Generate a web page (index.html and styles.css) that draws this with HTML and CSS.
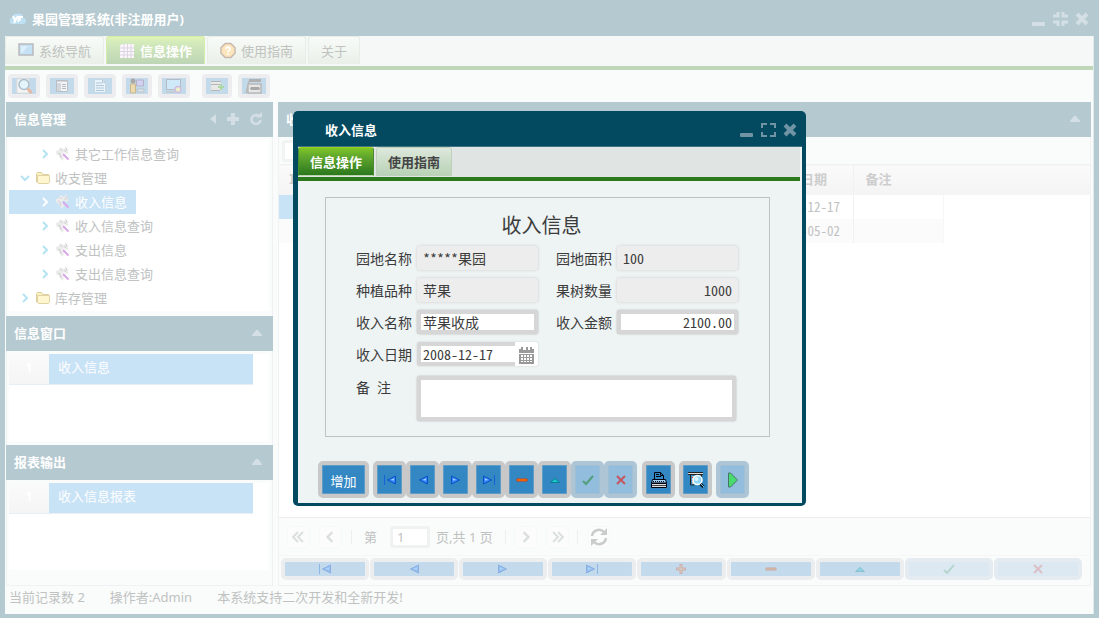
FILE: index.html
```html
<!DOCTYPE html>
<html lang="zh-CN">
<head>
<meta charset="utf-8">
<title>果园管理系统</title>
<meta name="viewport" content="width=device-width, initial-scale=1">
<link rel="stylesheet" href="styles.css">
</head>
<body>
<svg class="defs" aria-hidden="true">
  <defs>
    <symbol id="first" viewBox="0 0 12 12"><path d="M.5 1v10" stroke="#1463d8"/><path d="M11.500 2v8L3.500 6z" fill="#2f86ff" stroke="#0c4fc0"/><path d="M10 4.500v2L6.500 6z" fill="#a9d4ff"/></symbol>
    <symbol id="prev" viewBox="0 0 12 12"><path d="M10.500 2v8L2.500 6z" fill="#2f86ff" stroke="#0c4fc0"/><path d="M9 4.500v2L5.500 6z" fill="#a9d4ff"/></symbol>
    <symbol id="next" viewBox="0 0 12 12"><path d="M1.500 2v8l8-4z" fill="#2f86ff" stroke="#0c4fc0"/><path d="M3 4.500v2L6.500 6z" fill="#a9d4ff"/></symbol>
    <symbol id="last" viewBox="0 0 12 12"><path d="M11.500 1v10" stroke="#1463d8"/><path d="M.5 2v8l8-4z" fill="#2f86ff" stroke="#0c4fc0"/><path d="M2 4.500v2L5.500 6z" fill="#a9d4ff"/></symbol>
    <symbol id="minus" viewBox="0 0 12 12"><path d="M1 5h10v2H1z" fill="#ff8a00" stroke="#dd3c00"/></symbol>
    <symbol id="plus" viewBox="0 0 12 12"><path d="M6 1v10M1 6h10" stroke="#f04a10" stroke-width="3"/><path d="M6 2v8M2 6h8" stroke="#ffb070"/></symbol>
    <symbol id="up" viewBox="0 0 12 12"><path d="M1.500 8.500h9L6 4.500z" fill="#18c9cf" stroke="#087f8f"/></symbol>
    <symbol id="tick" viewBox="0 0 12 12"><path d="M1 7l3 3 7-8" fill="none" stroke="#2f8f4b" stroke-width="2"/></symbol>
    <symbol id="cross" viewBox="0 0 12 12"><path d="M2 2l8 8M10 2l-8 8" stroke="#e02020" stroke-width="2"/></symbol>
    <symbol id="folder" viewBox="0 0 16 14"><path d="M1.500 11V2.500l1-1h4l1 2h6l1 1V11z" fill="#fdf0c0" stroke="#ddcfa0"/><path d="M2.500 4.500h11l1 1v6l-1 1h-10l-1-1z" fill="#fff6cf" stroke="#e0d3a6"/></symbol>
    <symbol id="wand" viewBox="0 0 16 16"><path d="M1 5l3-1 1-3 2 1 2 1 2-3 1 3 2 1-2 1 2 2-3 1-2-2-2 2 2 4-2 3-3-5-3-2z" fill="#ececec"/><path d="M5 3l2 2M11 2l1 3M3 7l2 1 1 4M9 4l2 2" fill="none" stroke="#d0d0d0"/><path d="M8 8l5.500 5.500" stroke="#d9a8e8" stroke-width="2"/></symbol>
    <symbol id="chev" viewBox="0 0 8 10"><path d="M2 1l4 4-4 4" fill="none" stroke="currentColor" stroke-width="2"/></symbol>
    <symbol id="chevs" viewBox="0 0 14 12"><path d="M2 1l5 5-5 5M7 1l5 5-5 5" fill="none" stroke="currentColor" stroke-width="2"/></symbol>
    <symbol id="close" viewBox="0 0 14 14"><path d="M2 2l10 10M12 2L2 12" stroke="currentColor" stroke-width="4"/></symbol>
    <symbol id="min" viewBox="0 0 14 14"><rect x="0" y="10" width="13" height="4" rx="1" fill="currentColor"/></symbol>
    <symbol id="max" viewBox="0 0 15 14"><path d="M1 5V1h5M9 1h5v4M14 9v4H9M6 13H1V9" fill="none" stroke="currentColor" stroke-width="2"/></symbol>
    <symbol id="shrink" viewBox="0 0 15 14"><path d="M0 4h5V0M10 0v4h5M15 10h-5v4M5 14v-4H0" fill="none" stroke="currentColor" stroke-width="3"/></symbol>
    <symbol id="fold" viewBox="0 0 10 6"><path d="M0 6V5l4-5h2l4 5v1z" fill="currentColor"/></symbol>
  </defs>
</svg>

<div class="app">
  <header class="titlebar">
    <svg width="16" height="14" viewBox="0 0 16 14"><path d="M3 12a3 3 0 0 1-1-6 4 4 0 0 1 5-4 4 4 0 0 1 6 4 3 3 0 0 1 0 6z" fill="#bfe0f3"/><path d="M3 4l2 4 3-4M6 7l-2 4M8 10l1-5h4M9 7.500h2" fill="none" stroke="#fff" stroke-width="2"/></svg>
    <h1>果园管理系统(非注册用户)</h1>
    <div class="winbtns">
      <button aria-label="最小化"><svg width="14" height="14"><use href="#min"/></svg></button>
      <button aria-label="还原"><svg width="15" height="14"><use href="#shrink"/></svg></button>
      <button aria-label="关闭"><svg width="14" height="14"><use href="#close"/></svg></button>
    </div>
  </header>

  <div class="frame">
    <nav class="tabs">
      <button class="tab"><svg width="16" height="16" viewBox="0 0 16 16"><rect x="1" y="1" width="14" height="11" fill="#c5e2f5" stroke="#b9b9bd" stroke-width="1.500"/><path d="M3 3h7l-6 7H3z" fill="#ddeffa"/></svg>系统导航</button>
      <button class="tab on"><svg width="16" height="16" viewBox="0 0 16 16"><path d="M3 1h12v14H1V3z" fill="#faf6fc"/><path d="M1 5h14M1 8.500h14M1 12h14M5 1v14M8.500 1v14M12 1v14" stroke="#ddd5e2"/></svg>信息操作</button>
      <button class="tab"><svg width="16" height="17" viewBox="0 0 17 17"><path d="M5.500 1h6L16 5.500v6L11.500 16h-6L1 11.500v-6z" fill="#fae3b8" stroke="#c9b7b2" stroke-width="1.500"/><circle cx="8.500" cy="8.500" r="5.500" fill="#fbe6bd"/><path d="M6.500 7a2 2 0 1 1 3 1.500q-1 .5-1 1.500M8.500 11.500v1.500" fill="none" stroke="#fff" stroke-width="2"/></svg>使用指南</button>
      <button class="tab">关于</button>
    </nav>

    <div class="toolbar">
      <button aria-label="查询"><svg width="18" height="16" viewBox="0 0 18 16"><path d="M2 1h12v14H2z" fill="#f4f4f4" stroke="#ddd"/><circle cx="9" cy="6.500" r="5" fill="#e3f4fb" stroke="#aabfcb" stroke-width="1.500"/><path d="M12.500 10.500l4 4.500" stroke="#e6b9a3" stroke-width="3"/></svg></button>
      <button aria-label="列表"><svg width="16" height="16" viewBox="0 0 16 16"><path d="M2.500 2.500h11v11h-11z" fill="#f2f4f6" stroke="#b9c0c8"/><path d="M2 3h12M6 5v8M8 6.500h4M8 8.500h4M8 10.500h4M4 5v8" stroke="#b9b9c0"/></svg></button>
      <button aria-label="文档"><svg width="16" height="16" viewBox="0 0 16 16"><path d="M2.500 1.500h8l3 3v10h-11z" fill="#e7f4fc" stroke="#c7d7e2"/><path d="M4 5h6M4 7.500h8M4 10h8M4 12.500h8M10.500 1.500v3h3" fill="none" stroke="#b3c8d6"/></svg></button>
      <button class="narrow" aria-label="用户"><svg width="18" height="16" viewBox="0 0 18 16"><circle cx="5" cy="3" r="2.500" fill="#a8a8a8"/><path d="M2.500 6h5v9h-5z" fill="#ecd9ae" stroke="#c9b78e"/><path d="M8.500 2h7v6h-7z" fill="#d4d0f4" stroke="#b3b3c6"/><path d="M9 11h7v3H9z" fill="#dde4ea" stroke="#b8c0c8"/></svg></button>
      <button aria-label="屏幕"><svg width="18" height="16" viewBox="0 0 18 16"><path d="M1.500 1.500h14v10h-14z" fill="#cfe9f8" stroke="#b3bcc4"/><path d="M1 14h9" stroke="#c3ccd3" stroke-width="2"/><circle cx="13" cy="11.500" r="3" fill="#e9efc8" stroke="#cfbce0" stroke-width="1.500"/></svg></button>
      <button class="narrow apart" aria-label="添加记录"><svg width="16" height="16" viewBox="0 0 16 16"><path d="M2 3h10v10H2z" fill="#e8e9e6"/><path d="M2 3.500h10M2 6.500h10M2 12.500h9" stroke="#b5b5b5"/><path d="M12 6v6M9 9h6" stroke="#acd8a4" stroke-width="2"/></svg></button>
      <button aria-label="打印"><svg width="18" height="16" viewBox="0 0 18 16"><path d="M4 1h12v3H4z" fill="#b0b0b0"/><path d="M1 15L4 3M3 6h13v9H3z" fill="#e6e6e6" stroke="#b9b9b9" stroke-width="1.500"/><path d="M6 9h8l1 1.500-1 1.500H6l-1-1.500z" fill="#a8a8a8"/></svg></button>
    </div>

    <main class="work">
      <aside class="side">
        <h2 class="bar">信息管理
          <span class="tools">
            <button aria-label="收起"><svg width="6" height="10" viewBox="0 0 6 10"><path d="M6 0v10L0 5z" fill="currentColor"/></svg></button>
            <button aria-label="添加"><svg width="12" height="12" viewBox="0 0 12 12"><path d="M6 0v12M0 6h12" stroke="currentColor" stroke-width="4"/></svg></button>
            <button aria-label="刷新"><svg width="12" height="13" viewBox="0 0 12 13"><path d="M9 4a4.500 4.500 0 1 0 1.500 4" fill="none" stroke="currentColor" stroke-width="2.500"/><path d="M6 5.500h6V0z" fill="currentColor"/></svg></button>
          </span>
        </h2>
        <ul class="tree">
          <li class="sub"><svg class="chev" width="8" height="10"><use href="#chev"/></svg><svg width="16" height="16"><use href="#wand"/></svg>其它工作信息查询</li>
          <li><svg class="chev open" width="8" height="10"><use href="#chev"/></svg><svg width="16" height="14"><use href="#folder"/></svg>收支管理</li>
          <li class="sub sel"><svg class="chev" width="8" height="10"><use href="#chev"/></svg><svg width="16" height="16"><use href="#wand"/></svg>收入信息</li>
          <li class="sub"><svg class="chev" width="8" height="10"><use href="#chev"/></svg><svg width="16" height="16"><use href="#wand"/></svg>收入信息查询</li>
          <li class="sub"><svg class="chev" width="8" height="10"><use href="#chev"/></svg><svg width="16" height="16"><use href="#wand"/></svg>支出信息</li>
          <li class="sub"><svg class="chev" width="8" height="10"><use href="#chev"/></svg><svg width="16" height="16"><use href="#wand"/></svg>支出信息查询</li>
          <li><svg class="chev" width="8" height="10"><use href="#chev"/></svg><svg width="16" height="14"><use href="#folder"/></svg>库存管理</li>
        </ul>
        <h2 class="bar">信息窗口<span class="tools"><button aria-label="折叠"><svg width="10" height="6"><use href="#fold"/></svg></button></span></h2>
        <ol class="list"><li><b>1</b><span>收入信息</span></li></ol>
        <h2 class="bar">报表输出<span class="tools"><button aria-label="折叠"><svg width="10" height="6"><use href="#fold"/></svg></button></span></h2>
        <ol class="list"><li><b>1</b><span>收入信息报表</span></li></ol>
      </aside>

      <section class="data">
        <h2 class="bar">收入<span class="tools"><button aria-label="折叠"><svg width="10" height="6"><use href="#fold"/></svg></button></span></h2>
        <div class="filter"><input type="text" aria-label="过滤"></div>
        <div class="gridwrap">
          <table class="grid">
            <thead><tr><th class="c-id">ID</th><th class="c-wide"></th><th class="c-std">收入日期</th><th class="c-std line">备注</th><th class="rest"></th></tr></thead>
            <tbody>
              <tr><td class="picked"></td><td></td><td>2008-12-17</td><td class="line end"></td><td class="rest"></td></tr>
              <tr class="alt"><td></td><td></td><td>2008-05-02</td><td class="line end"></td><td class="rest"></td></tr>
            </tbody>
          </table>
        </div>
        <div class="pager">
          <button aria-label="首页"><svg class="flip" width="14" height="12"><use href="#chevs"/></svg></button>
          <button aria-label="上一页"><svg class="flip" width="10" height="12"><use href="#chev"/></svg></button>
          <i></i>
          <label for="page">第</label><input id="page" type="text" value="1"><span>页,共 1 页</span>
          <i class="far"></i>
          <button aria-label="下一页"><svg width="10" height="12"><use href="#chev"/></svg></button>
          <button aria-label="末页"><svg width="14" height="12"><use href="#chevs"/></svg></button>
          <i class="near"></i>
          <button class="reload" aria-label="刷新"><svg width="18" height="18" viewBox="0 0 18 18"><path d="M2 8a7 7 0 0 1 12-4M16 10a7 7 0 0 1-12 4" fill="none" stroke="currentColor" stroke-width="2.500"/><path d="M10 7h7V0zM8 11H1v7z" fill="currentColor"/></svg></button>
        </div>
        <div class="records">
          <button aria-label="首条"><svg width="12" height="12"><use href="#first"/></svg></button>
          <button aria-label="上一条"><svg width="12" height="12"><use href="#prev"/></svg></button>
          <button aria-label="下一条"><svg width="12" height="12"><use href="#next"/></svg></button>
          <button aria-label="末条"><svg width="12" height="12"><use href="#last"/></svg></button>
          <button aria-label="增加"><svg width="12" height="12"><use href="#plus"/></svg></button>
          <button aria-label="删除"><svg width="12" height="12"><use href="#minus"/></svg></button>
          <button aria-label="编辑"><svg width="12" height="12"><use href="#up"/></svg></button>
          <button disabled aria-label="保存"><svg width="12" height="12"><use href="#tick"/></svg></button>
          <button disabled aria-label="取消"><svg width="12" height="12"><use href="#cross"/></svg></button>
        </div>
      </section>
    </main>

    <footer class="status"><span>当前记录数 2</span><span>操作者:Admin</span><span>本系统支持二次开发和全新开发!</span></footer>
  </div>
</div>

<div class="overlay">
  <section class="dialog" role="dialog" aria-labelledby="dlg">
    <header class="dtitle">
      <h2 id="dlg">收入信息</h2>
      <div class="winbtns">
        <button aria-label="最小化"><svg width="14" height="14"><use href="#min"/></svg></button>
        <button aria-label="最大化"><svg width="15" height="14"><use href="#max"/></svg></button>
        <button aria-label="关闭"><svg width="14" height="14"><use href="#close"/></svg></button>
      </div>
    </header>
    <div class="dbody">
      <nav class="dtabs"><button class="on">信息操作</button><button>使用指南</button></nav>
      <form class="card">
        <h3>收入信息</h3>
        <div class="fields">
          <label for="f1">园地名称</label><input id="f1" type="text" value="*****果园" readonly>
          <label for="f2">园地面积</label><input id="f2" type="text" value="100" readonly>
          <label for="f3">种植品种</label><input id="f3" type="text" value="苹果" readonly>
          <label for="f4">果树数量</label><input id="f4" class="num" type="text" value="1000" readonly>
          <label for="f5">收入名称</label><input id="f5" type="text" value="苹果收成">
          <label for="f6">收入金额</label><input id="f6" class="num" type="text" value="2100.00">
          <label for="f7">收入日期</label>
          <div class="date"><input id="f7" type="text" value="2008-12-17"><button type="button" aria-label="选择日期"><svg width="15" height="17" viewBox="0 0 15 17"><path d="M2 0h2v3h3V0h2v3h2V0h2v2h2v4H0V2h2z" fill="#999"/><path d="M0 7h15v10H0z" fill="#999"/><path d="M2 8h2v2H2zM5 8h2v2H5zM8 8h2v2H8zM11 8h2v2h-2zM2 11h2v2H2zM5 11h2v2H5zM8 11h2v2H8zM11 11h2v2h-2zM2 14h2v1H2zM5 14h2v1H5zM8 14h2v1H8zM11 14h2v1h-2z" fill="#fff"/></svg></button></div>
          <label class="memo" for="f8">备 注</label><textarea id="f8"></textarea>
        </div>
      </form>
      <div class="actions">
        <button class="add">增加</button>
        <div class="group">
          <button aria-label="首条"><svg width="12" height="12"><use href="#first"/></svg></button>
          <button aria-label="上一条"><svg width="12" height="12"><use href="#prev"/></svg></button>
          <button aria-label="下一条"><svg width="12" height="12"><use href="#next"/></svg></button>
          <button aria-label="末条"><svg width="12" height="12"><use href="#last"/></svg></button>
          <button aria-label="删除"><svg width="12" height="12"><use href="#minus"/></svg></button>
          <button aria-label="编辑"><svg width="12" height="12"><use href="#up"/></svg></button>
          <button disabled aria-label="保存"><svg width="12" height="12"><use href="#tick"/></svg></button>
          <button disabled aria-label="取消"><svg width="12" height="12"><use href="#cross"/></svg></button>
        </div>
        <button aria-label="打印"><svg width="18" height="18" viewBox="0 0 18 18"><path d="M4.500 8V1.500h6l3 3V8" fill="#3388c4" stroke="#001"/><path d="M6 3.500h3M6 5.500h5M10.500 1.500v3h3" fill="none" stroke="#001"/><path d="M2.500 8.500h13l1 3.500h-15z" fill="#9dd2f2" stroke="#001"/><path d="M3 10.500h12" stroke="#001" stroke-dasharray="1 1"/><path d="M1.500 12.500h15v4h-15z" fill="#ddd" stroke="#001"/><path d="M2 14.500h14" stroke="#444"/></svg></button>
        <button aria-label="预览"><svg width="18" height="18" viewBox="0 0 18 18"><path d="M1 2.500h15" stroke="#222" stroke-width="3"/><path d="M1 2.500h15" stroke="#ddd"/><path d="M3.500 4v10H7M14.500 4v3" fill="none" stroke="#222"/><path d="M5 5h4v8H5z" fill="#bbb"/><path d="M5 6.500h2M5 9.500h2" stroke="#d33"/><circle cx="10.500" cy="9" r="4.500" fill="#8fd6f8" stroke="#fff" stroke-width="1.500"/><circle cx="9.500" cy="8" r="2" fill="#e0f6ff"/><path d="M13.500 13l3 3" stroke="#111" stroke-width="3"/><path d="M14 13l3 3" stroke="#6cf"/></svg></button>
        <button class="run" disabled aria-label="运行"><svg width="12" height="16" viewBox="0 0 12 16"><path d="M1.500 1h2l7 7-7 7h-2z" fill="#48dc70" stroke="#477565"/></svg></button>
      </div>
    </div>
  </section>
</div>
</body>
</html>
```

FILE: styles.css
```css
* { box-sizing: border-box; }
body { margin: 0; font: 13px/18px "Noto Sans", "Noto Sans CJK SC", sans-serif; color: #c0c2c2; background: #fff; }
h1, h2, h3, ul, ol { margin: 0; padding: 0; font-size: 13px; list-style: none; }
button, input, textarea { font: inherit; color: inherit; margin: 0; padding: 0; border: 0; background: none; outline: 0; }
button { display: flex; align-items: center; justify-content: center; }
svg { display: block; flex: none; }
.defs { position: absolute; width: 0; height: 0; }

.app { min-height: 100vh; display: flex; flex-direction: column; background: #b5c9d0; }
.titlebar { height: 36px; padding: 2px 10px 0; display: flex; align-items: center; gap: 6px; color: #fff; }
.winbtns { margin-left: auto; display: flex; gap: 7px; color: #d3dfe5; }
.frame { flex: 1; margin: 0 5px 4px; display: flex; flex-direction: column; background: #fafcfb; border-right: 1px solid #e0eaed; }

.tabs { display: flex; gap: 2px; height: 34px; padding-bottom: 5px; background: #f5f8f7; border-bottom: 4px solid #c0d6b8; }
.tab { height: 28px; padding: 0 12px; gap: 5px; border: 1px solid #e6eee6; border-bottom: 0; border-radius: 3px 3px 0 0; background: linear-gradient(#f8fbf8, #e9f0e8); color: #bfc2bf; }
.tab.on { background: linear-gradient(#e2f5b5, #d3eabc 20%, #bdd5b5); color: #fff; font-weight: bold; border-color: #d3edaa; }

.toolbar { display: flex; gap: 6px; padding: 4px 3px; }
.toolbar button { width: 32px; height: 24px; border: 4px solid #ededf0; border-radius: 4px; background: #c3daeb; }
.toolbar .narrow { width: 30px; }
.toolbar .apart { margin-left: 6px; }

.work { flex: 1; display: flex; gap: 5px; padding: 0 2px 0 1px; }
.side, .data { display: flex; flex-direction: column; border: 1px solid #eff2f3; border-top: 0; }
.side { width: 267px; padding-bottom: 15px; }
.data { flex: 1; min-width: 0; }
.bar { height: 35px; flex: none; display: flex; align-items: center; padding: 0 9px 2px 8px; margin: 0 -1px; background: #b5c9d0; color: #fff; }
.tools { margin-left: auto; display: flex; align-items: center; gap: 12px; color: #d3dfe5; }
.tools button { margin-right: 2px; }
.side .tools { gap: 9px; }
.tree { flex: 1; margin: 3px 3px 5px 2px; background: #fff; padding-top: 2px; }
.tree li { height: 24px; display: flex; align-items: center; gap: 4px; padding: 0 9px 1px 12px; width: max-content; }
.tree li svg + svg { margin-left: 2px; }
.tree .sub { padding-left: 32px; }
.tree .sel { background: #c8e2f6; color: #fff; }
.chev { color: #b5e3f4; }
.sel .chev { color: #fff; }
.open { transform: rotate(90deg); }
.list { min-height: 87px; margin: 3px 3px 4px 2px; background: #fff; }
.list:last-child { margin-bottom: 0; }
.list li { display: flex; height: 31px; margin-right: 16px; border-bottom: 1px solid #e7eef4; }
.list b { width: 40px; text-align: center; line-height: 26px; color: #fff; background: linear-gradient(#fafafa, #f5f5f5); }
.list span { flex: 1; padding-left: 9px; line-height: 26px; background: #c8e2f6; color: #fff; }

.filter { height: 27px; padding: 3px; }
.filter input { width: 120px; height: 22px; border: 3px solid #f2f3f3; border-radius: 3px; background: #fff; }
.gridwrap { flex: 1; background: #fff; }
.grid { width: 100%; border-collapse: collapse; table-layout: fixed; font-family: "Noto Sans Mono CJK SC", "Noto Sans CJK SC", sans-serif; }
.grid th { height: 30px; padding: 0 0 2px 12px; text-align: left; color: #cdcdcd; background: linear-gradient(#fafafa, #f4f4f4); border-top: 1px solid #f0f2f2; }
.grid td { height: 24px; padding: 0 0 0 12px; line-height: 18px; }
.grid .c-id { width: 90px; }
.grid .c-wide { width: 394px; }
.grid .c-std { width: 90px; }
.grid th.c-id { padding-left: 10px; }
.grid .line { border-left: 1px solid #f1f1f1; }
.grid .end { border-right: 1px solid #f7f7f7; }
.grid .picked { background: #c8e2f6; }
.grid .alt td { background: #fbfbfb; }
.grid .alt .rest { background: none; }

.pager { display: flex; align-items: center; height: 39px; padding: 1px 8px 0; border-top: 1px solid #ececec; border-bottom: 1px solid #f5f6f6; }
.pager button { width: 22px; height: 22px; margin-right: 10px; border-radius: 3px; background: #fcfcfc; border: 1px solid #f8f8f8; color: #dcdfdf; }
.flip { transform: scaleX(-1); }
.pager i { width: 1px; height: 14px; background: #edefef; margin-right: 12px; }
.pager .far { margin: 0 9px 0 12px; }
.pager .near { margin: 0 10px 0 -2px; }
.pager input { width: 40px; height: 22px; margin: 0 6px 0 13px; padding-left: 4px; border: 3px solid #f0f1f1; border-radius: 3px; background: #fff; }
.pager .reload { color: #cacccc; }
.records { display: grid; grid-template-columns: repeat(9, 1fr); gap: 1px; padding: 2px 8px 5px 2px; }
.records button { height: 22px; border: 4px solid #ebedee; border-radius: 5px; background: #c3daed; }
.records button svg { opacity: .3; }
.records button:disabled { background: #dce9f3; border-color: #e5ecf1; }
.records button:disabled svg { opacity: .2; }
.status { height: 28px; display: flex; gap: 25px; padding: 2px 4px; }

.overlay { position: absolute; inset: 0; display: grid; place-items: center; padding-bottom: 1px; }
.dialog { width: 513px; padding: 0 4px 3px 5px; background: #034a61; border-radius: 5px; color: #3c3c3c; }
.dtitle { height: 36px; display: flex; align-items: center; padding: 2px 5px 0 27px; color: #fff; border-bottom: 1px solid #3f7384; }
.dtitle .winbtns { color: #7194a4; }
.dbody { background: #eef3f4; padding-bottom: 5px; }
.dtabs { display: flex; gap: 2px; height: 34px; margin-right: 2px; background: #e0e5e4; border-bottom: 4px solid #2c7a1d; }
.dtabs button { height: 29px; padding: 1px 11px 0; font-weight: bold; color: #444; border: 1px solid #bdd0bb; border-radius: 3px 3px 0 0; background: linear-gradient(#dde8dc, #b9d2b6); }
.dtabs .on { color: #fff; background: linear-gradient(#7fc625, #62a92e 30%, #2b781e); border-color: #9bd519 #488b35 #b9d6aa; }
.card { margin: 16px 32px 24px 27px; height: 240px; border: 1px solid #bec2c3; padding: 14px 30px 0; font: 14px/20px "Noto Sans Mono CJK SC", "Noto Sans CJK SC", sans-serif; }
.card h3 { font-size: 20px; line-height: 26px; font-weight: normal; text-align: center; margin: 0 12px 8px 0; }
.fields { display: grid; grid-template-columns: 56px 122px 68px 122px; column-gap: 5px; row-gap: 8px; align-items: center; }
.fields label:nth-of-type(even) { margin-left: 12px; white-space: nowrap; }
.fields .memo:nth-of-type(even) { margin-left: 0; }
.fields input { width: 121px; height: 24px; padding: 0 2px; border: 4px solid #d6d6d6; border-radius: 3px; background: #fff; box-shadow: 0 0 2px #aaa; line-height: 16px; }
.fields input:read-only { background: #ededed; border-color: #ededed; box-shadow: 0 0 3px #ccc; }
.fields .num { text-align: right; }
.date { grid-column: 2 / -1; width: 121px; height: 24px; display: flex; background: #fff; border-radius: 3px; box-shadow: 0 0 2px #ccc; }
.date input { width: 98px; border-right: 0; border-radius: 3px 0 0 3px; box-shadow: none; }
.date button { flex: 1; padding-top: 2px; }
.memo { align-self: start; padding-top: 3px; white-space: pre; }
.fields textarea { grid-column: 2 / -1; width: 319px; height: 45px; margin-top: 2px; border: 4px solid #d6d6d6; border-radius: 3px; background: #fff; box-shadow: 0 0 2px #aaa; resize: none; }

.actions { display: flex; gap: 4px; padding-left: 20px; }
.group { display: flex; margin-right: 1px; }
.actions button { width: 33px; height: 37px; border: 4px solid #c8c8c8; border-radius: 5px; background: #3388c4; box-shadow: inset 0 0 0 1px #5f9cc6; }
.actions .add { width: 51px; color: #fff; padding-top: 3px; }
.actions button:disabled { background: #92bddc; border-color: #adc5d4; box-shadow: inset 0 0 0 1px #a1bfd3; }
.actions .group button:disabled svg { opacity: .65; }
```
